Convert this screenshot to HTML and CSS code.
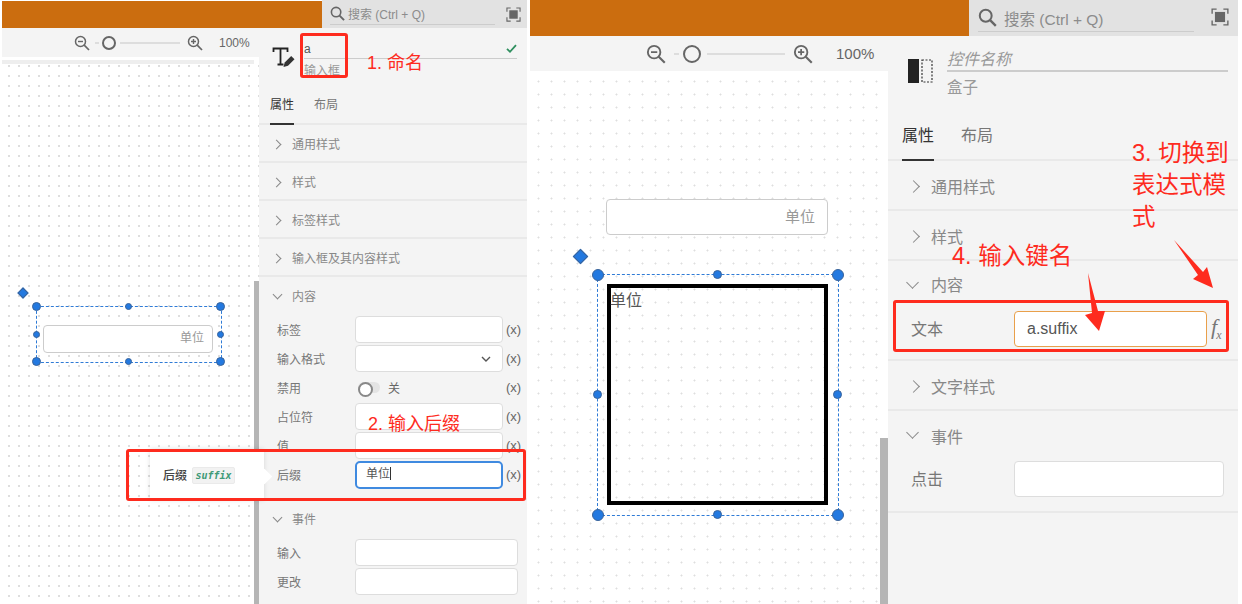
FILE: index.html
```html
<!DOCTYPE html>
<html lang="zh">
<head>
<meta charset="utf-8">
<title>表达式</title>
<link rel="stylesheet" href="styles.css">
</head>
<body>
<div class="page">

  <section class="shot shot-a">
    <header class="top">
      <div class="brand"></div>
      <div class="search">
        <div class="search-field">
          <svg class="ic-search" viewBox="0 0 16 16"><circle cx="6.500" cy="6.500" r="5" fill="none" stroke="#666" stroke-width="1.700"/><path d="M10.200 10.200 15 15" stroke="#666" stroke-width="2"/></svg>
          <span>搜索 (Ctrl + Q)</span>
        </div>
        <svg class="ic-full" viewBox="0 0 16 16"><path d="M1 5V1h4M11 1h4v4M15 11v4h-4M5 15H1v-4" fill="none" stroke="#666" stroke-width="1.200"/><rect x="3.500" y="3.500" width="9" height="9" fill="#666"/></svg>
      </div>
    </header>
    <div class="work">
      <div class="col">
        <div class="zoombar">
          <svg class="ic-zoom" viewBox="0 0 16 16"><circle cx="6.500" cy="6.500" r="5" fill="none" stroke="#666" stroke-width="1.500"/><path d="M4 6.500h5" stroke="#666" stroke-width="1.400"/><path d="M10.200 10.200 15 15" stroke="#666" stroke-width="1.700"/></svg>
          <span class="tick"></span>
          <span class="knob"></span>
          <span class="track"></span>
          <svg class="ic-zoom" viewBox="0 0 16 16"><circle cx="6.500" cy="6.500" r="5" fill="none" stroke="#666" stroke-width="1.500"/><path d="M4 6.500h5M6.500 4v5" stroke="#666" stroke-width="1.400"/><path d="M10.200 10.200 15 15" stroke="#666" stroke-width="1.700"/></svg>
          <span class="pct">100%</span>
        </div>
        <div class="canvas">
          <div class="strip"></div>
          <div class="selection">
            <div class="field">单位</div>
            <i class="h hc tl"></i><i class="h hc tr"></i><i class="h hc bl"></i><i class="h hc br"></i>
            <i class="h hm tm"></i><i class="h hm bm"></i><i class="h hm ml"></i><i class="h hm mr"></i>
            <i class="diamond"></i>
          </div>
          <div class="scroll"></div>
        </div>
      </div>
      <aside class="panel">
        <div class="head">
          <svg class="ic-t" viewBox="0 0 23 21"><path d="M1.500 5V1.500h14V5M8.500 1.500V17M5.500 17.500h6" fill="none" stroke="#222" stroke-width="1.800"/><path d="M11.500 20l1.200-4.500 6.500-6.500 3.300 3.300-6.500 6.500z" fill="#333"/></svg>
          <div class="head-text">
            <div class="name-line"><span>a</span><svg class="ic-check" viewBox="0 0 12 10"><path d="M1 5.500 4.300 8.600 11 1.200" fill="none" stroke="#2f8f5f" stroke-width="2"/></svg></div>
            <div class="kind">输入框</div>
          </div>
        </div>
        <nav class="tabs"><span class="tab on">属性</span><span class="tab">布局</span></nav>
        <div class="acc">通用样式</div>
        <div class="acc">样式</div>
        <div class="acc">标签样式</div>
        <div class="acc">输入框及其内容样式</div>
        <div class="sec">
          <div class="sec-head">内容</div>
          <div class="row"><label>标签</label><div class="inp"></div><em>(x)</em></div>
          <div class="row"><label>输入格式</label><div class="inp sel"><svg class="ic-down" viewBox="0 0 10 6"><path d="M1 1l4 4 4-4" fill="none" stroke="#555" stroke-width="1.400"/></svg></div><em>(x)</em></div>
          <div class="row"><label>禁用</label><div class="tog"><span class="switch"></span><span>关</span></div><em>(x)</em></div>
          <div class="row"><label>占位符</label><div class="inp"></div><em>(x)</em></div>
          <div class="row"><label>值</label><div class="inp"></div><em>(x)</em></div>
          <div class="row"><label>后缀</label><div class="inp act">单位</div><em>(x)</em></div>
        </div>
        <div class="sec sec-ev">
          <div class="sec-head">事件</div>
          <div class="row"><label>输入</label><div class="inp wide"></div></div>
          <div class="row"><label>更改</label><div class="inp wide"></div></div>
        </div>
      </aside>
    </div>
    <div class="tip">
      <b>后缀</b><code>suffix</code>
    </div>
  </section>

  <section class="shot shot-b">
    <header class="top">
      <div class="brand"></div>
      <div class="search">
        <div class="search-field">
          <svg class="ic-search" viewBox="0 0 16 16"><circle cx="6.500" cy="6.500" r="5" fill="none" stroke="#666" stroke-width="1.700"/><path d="M10.200 10.200 15 15" stroke="#666" stroke-width="2"/></svg>
          <span>搜索 (Ctrl + Q)</span>
        </div>
        <svg class="ic-full" viewBox="0 0 16 16"><path d="M1 5V1h4M11 1h4v4M15 11v4h-4M5 15H1v-4" fill="none" stroke="#666" stroke-width="1.200"/><rect x="3.500" y="3.500" width="9" height="9" fill="#666"/></svg>
      </div>
    </header>
    <div class="work">
      <div class="col">
        <div class="zoombar">
          <svg class="ic-zoom" viewBox="0 0 16 16"><circle cx="6.500" cy="6.500" r="5" fill="none" stroke="#666" stroke-width="1.500"/><path d="M4 6.500h5" stroke="#666" stroke-width="1.400"/><path d="M10.200 10.200 15 15" stroke="#666" stroke-width="1.700"/></svg>
          <span class="tick"></span>
          <span class="knob"></span>
          <span class="track"></span>
          <svg class="ic-zoom" viewBox="0 0 16 16"><circle cx="6.500" cy="6.500" r="5" fill="none" stroke="#666" stroke-width="1.500"/><path d="M4 6.500h5M6.500 4v5" stroke="#666" stroke-width="1.400"/><path d="M10.200 10.200 15 15" stroke="#666" stroke-width="1.700"/></svg>
          <span class="pct">100%</span>
        </div>
        <div class="canvas">
          <div class="field free">单位</div>
          <div class="selection">
            <div class="box">单位</div>
            <i class="h hc tl"></i><i class="h hc tr"></i><i class="h hc bl"></i><i class="h hc br"></i>
            <i class="h hm tm"></i><i class="h hm bm"></i><i class="h hm ml"></i><i class="h hm mr"></i>
            <i class="diamond"></i>
          </div>
          <div class="scroll"></div>
        </div>
      </div>
      <aside class="panel">
        <div class="head">
          <svg class="ic-box" viewBox="0 0 25 24"><rect x="0" y="0" width="11" height="24" fill="#222"/><rect x="14" y="1" width="10" height="22" fill="none" stroke="#333" stroke-width="1.200" stroke-dasharray="2 1.500"/></svg>
          <div class="head-text">
            <div class="name-line ph"><span>控件名称</span></div>
            <div class="kind">盒子</div>
          </div>
        </div>
        <nav class="tabs"><span class="tab on">属性</span><span class="tab">布局</span></nav>
        <div class="acc">通用样式</div>
        <div class="acc">样式</div>
        <div class="sec">
          <div class="sec-head">内容</div>
          <div class="row"><label>文本</label><div class="inp expr">a.suffix</div><span class="fx">f<sub>x</sub></span></div>
        </div>
        <div class="acc">文字样式</div>
        <div class="sec sec-ev">
          <div class="sec-head">事件</div>
          <div class="row"><label>点击</label><div class="inp click"></div></div>
        </div>
      </aside>
    </div>
  </section>

  <div class="mark m1"></div>
  <div class="note n1">1. 命名</div>
  <div class="mark m2"></div>
  <div class="note n2">2. 输入后缀</div>
  <div class="mark m3"></div>
  <div class="note big n3">3. 切换到<br>表达式模<br>式</div>
  <div class="note big n4">4. 输入键名</div>
  <svg class="arrows" viewBox="0 0 1242 604"><path d="M1174 240 1203 272 1207 267 1213 288 1193 279 1198 275z" fill="#fe2b1e"/><path d="M1088 273 1098 311 1105 311 1099 331 1085 315 1092 313z" fill="#fe2b1e"/></svg>
</div>
</body>
</html>
```
FILE: styles.css
```css
* { box-sizing: border-box; }
html, body { margin: 0; padding: 0; background: #fff; }
body { font-family: "Liberation Sans", "Noto Sans CJK SC", sans-serif; color: #666; }
.page { position: relative; width: 1242px; height: 604px; overflow: hidden; display: flex; background: #fff; }

.shot { position: relative; height: 604px; display: flex; flex-direction: column; flex: none; }
.shot-a { width: 527px; padding-left: 2px; font-size: 12px; }
.shot-b { width: 708px; margin-left: 3px; font-size: 16px; }

.top { display: flex; flex: none; }
.shot-a .top { height: 28px; }
.shot-b .top { height: 36px; }
.brand { background: #cb6d0f; }
.shot-a .brand { width: 320px; margin-top: 1px; }
.shot-b .brand { width: 439px; }
.search { flex: 1; background: #e2e2e2; display: flex; align-items: flex-start; }
.search-field { display: flex; align-items: center; border-bottom: 1px solid #ccc; color: #8c8c8c; }
.shot-a .search-field { margin: 2px 0 0 8px; width: 165px; height: 23px; gap: 3px; font-size: 12px; }
.shot-b .search-field { margin: 4px 0 0 9px; width: 216px; height: 28px; gap: 7px; font-size: 15.500px; }
.ic-search { flex: none; }
.shot-a .ic-search { width: 15px; height: 15px; }
.shot-b .ic-search { width: 19px; height: 19px; }
.ic-full { flex: none; }
.shot-a .ic-full { width: 15px; height: 15px; margin: 7px 0 0 11px; }
.shot-b .ic-full { width: 18px; height: 18px; margin: 8px 0 0 17px; }

.work { flex: 1; display: flex; min-height: 0; }
.col { display: flex; flex-direction: column; flex: none; }
.shot-a .col { width: 257px; }
.shot-b .col { width: 358px; }
.zoombar { display: flex; align-items: center; flex: none; background: #f4f4f4; }
.shot-a .zoombar { height: 29px; padding: 0 0 0 72px; }
.shot-b .zoombar { height: 35px; padding: 0 0 0 116px; }
.ic-zoom { flex: none; }
.shot-a .ic-zoom { width: 16px; height: 16px; }
.shot-b .ic-zoom { width: 20px; height: 20px; }
.tick { height: 2px; background: #ddd; flex: none; }
.shot-a .tick { width: 4px; margin-left: 5px; }
.shot-b .tick { width: 5px; margin-left: 8px; }
.knob { border: 2px solid #666; border-radius: 50%; flex: none; }
.shot-a .knob { width: 14px; height: 14px; margin-left: 3px; }
.shot-b .knob { width: 18px; height: 18px; margin-left: 4px; }
.track { height: 2px; background: #ddd; flex: none; }
.shot-a .track { width: 60px; margin: 0 7px 0 4px; }
.shot-b .track { width: 78px; margin: 0 8px 0 6px; }
.pct { color: #666; }
.shot-a .pct { margin-left: 16px; font-size: 12px; }
.shot-b .pct { margin-left: 23px; font-size: 15px; }

.canvas { position: relative; flex: 1; background-color: #fff; }
.shot-a .canvas { background-image: radial-gradient(circle, #dedede 0.8px, transparent 1px); background-size: 10px 10px; background-position: 2px 4px; }
.shot-b .canvas { background-image: radial-gradient(circle, #dedede 0.9px, transparent 1.100px); background-size: 13px 13px; background-position: 2px 4px; }
.strip { height: 4px; margin-top: 3px; margin-right: 5px; background: #eee; }
.scroll { position: absolute; right: 0; bottom: 0; background: #b5b5b5; }
.shot-a .scroll { width: 5px; height: 323px; right: 0; }
.shot-b .scroll { width: 8px; height: 166px; }

.selection { position: absolute; border: 1px dashed #2f7bd6; }
.shot-a .selection { left: 34px; top: 249px; width: 186px; height: 57px; }
.shot-b .selection { left: 67px; top: 203px; width: 242px; height: 242px; }
.field { position: absolute; background: #fff; border: 1px solid #ccc; border-radius: 4px; color: #999; text-align: right; }
.shot-a .field { left: 6px; top: 18px; width: 170px; height: 28px; line-height: 25px; font-size: 12px; padding-right: 8px; }
.shot-b .field.free { left: 76px; top: 128px; width: 222px; height: 36px; line-height: 34px; font-size: 15px; padding-right: 12px; }
.box { position: absolute; left: 9px; top: 9px; width: 221px; height: 221px; border: 4px solid #000; color: #555; font-size: 16px; line-height: 22px; padding-top: 2px; text-indent: -1px; }

.h { position: absolute; border-radius: 50%; background: #2379e0; border: 1px solid #39639a; }
.shot-a .hc { width: 9px; height: 9px; margin: -5px; }
.shot-a .hm { width: 7px; height: 7px; margin: -4px; }
.shot-b .hc { width: 12px; height: 12px; margin: -6.500px; }
.shot-b .hm { width: 9px; height: 9px; margin: -5px; }
.tl { left: 0; top: 0; }
.tr { left: 100%; top: 0; }
.bl { left: 0; top: 100%; }
.br { left: 100%; top: 100%; }
.tm { left: 50%; top: 0; }
.bm { left: 50%; top: 100%; }
.ml { left: 0; top: 50%; }
.mr { left: 100%; top: 50%; }
.diamond { position: absolute; background: #2379e0; border: 1px solid #39639a; transform: rotate(45deg); }
.shot-a .diamond { width: 8px; height: 8px; left: -18px; top: -18px; }
.shot-b .diamond { width: 11px; height: 11px; left: -23px; top: -24px; }

.panel { flex: 1; background: #f4f4f4; display: flex; flex-direction: column; min-width: 0; }
.head { display: flex; flex: none; }
.shot-a .head { height: 66px; padding: 19px 10px 0 13px; gap: 9px; }
.shot-b .head { height: 79px; padding: 23px 10px 0 20px; gap: 14px; }
.ic-t { width: 23px; height: 21px; flex: none; }
.ic-box { width: 25px; height: 24px; flex: none; }
.head-text { flex: 1; min-width: 0; }
.name-line { display: flex; justify-content: space-between; align-items: center; border-bottom: 1px solid #ccc; color: #555; }
.shot-a .name-line { height: 20px; margin-top: -8px; font-size: 12px; }
.shot-b .name-line { height: 27px; margin-top: -14px; border-bottom-width: 2px; }
.ph { color: #999; font-style: italic; font-size: 16px; }
.ic-check { width: 11px; height: 9px; }
.kind { color: #999; }
.shot-a .kind { margin-top: 3px; font-size: 12px; line-height: 18px; }
.shot-b .kind { margin-top: 4px; font-size: 15.500px; line-height: 24px; }

.tabs { display: flex; flex: none; border-bottom: 2px solid #e9e9e9; }
.shot-a .tabs { height: 31px; padding-left: 11px; gap: 20px; }
.shot-b .tabs { height: 46px; padding-left: 14px; gap: 27px; }
.tab { display: block; margin-bottom: -2px; color: #777; }
.shot-a .tab { height: 31px; padding-top: 1px; }
.shot-b .tab { height: 46px; padding-top: 7px; }
.tab.on { color: #333; border-bottom: 2px solid #333; }

.acc { position: relative; flex: none; border-bottom: 2px solid #e9e9e9; color: #888; }
.shot-a .acc { height: 38px; line-height: 40px; padding-left: 33px; }
.shot-b .acc { height: 50px; line-height: 53px; padding-left: 43px; }
.acc::before { content: ""; position: absolute; border-right: 1.500px solid #888; border-top: 1.500px solid #888; transform: rotate(45deg); }
.shot-a .acc::before { width: 6px; height: 6px; left: 14px; top: 16px; }
.shot-b .acc::before { width: 8px; height: 8px; left: 21px; top: 21px; }

.sec { flex: none; border-bottom: 2px solid #e9e9e9; }
.shot-a .sec { height: 223px; }
.shot-a .sec-ev { border-bottom: 0; height: auto; }
.shot-b .sec { height: 100px; }
.shot-b .sec-ev { height: 102px; }
.sec-head { position: relative; color: #888; }
.shot-a .sec-head { height: 39px; line-height: 40px; padding-left: 33px; }
.shot-b .sec-head { height: 50px; line-height: 50px; padding-left: 43px; }
.sec-head::before { content: ""; position: absolute; border-right: 1.500px solid #888; border-bottom: 1.500px solid #888; transform: rotate(45deg); }
.shot-a .sec-head::before { width: 6px; height: 6px; left: 15px; top: 14px; }
.shot-b .sec-head::before { width: 8px; height: 8px; left: 20px; top: 17px; }
.shot-b .sec-ev .sec-head { height: 50px; line-height: 53px; }

.row { display: flex; align-items: center; }
.shot-a .row { height: 27px; margin-bottom: 2px; padding-left: 18px; }
.shot-b .row { padding-left: 23px; }
.row label { flex: none; color: #777; }
.shot-a .row label { width: 78px; }
.shot-b .row label { width: 103px; margin-top: -2px; }
.inp { background: #fff; border: 1px solid #ddd; border-radius: 4px; flex: none; color: #555; }
.shot-a .inp { width: 148px; height: 27px; line-height: 25px; padding-left: 9px; }
.shot-a .row em { margin-left: 3px; font-style: normal; color: #666; font-size: 13px; }
.sel { display: flex; align-items: center; justify-content: flex-end; padding-right: 11px; }
.ic-down { width: 10px; height: 6px; }
.tog { width: 148px; display: flex; align-items: center; gap: 8px; padding-left: 3px; color: #666; }
.switch { position: relative; width: 22px; height: 11px; border-radius: 6px; background: #e4e4e4; }
.switch::before { content: ""; position: absolute; left: 0; top: 0; width: 11px; height: 11px; border-radius: 50%; background: #fff; border: 2px solid #888; }
.shot-a .inp.act { border: 2px solid #3f8ae0; line-height: 23px; height: 28px; padding-left: 9px; border-radius: 5px; }
.act::after { content: ""; display: inline-block; width: 1px; height: 13px; background: #333; vertical-align: -2px; }
.shot-a .inp.wide { width: 163px; }
.shot-b .inp.expr { width: 193px; height: 36px; line-height: 34px; padding-left: 12px; border: 1px solid #e9a04b; font-size: 16px; }
.shot-b .inp.click { width: 210px; height: 36px; }
.fx { margin-left: 4px; font: italic 400 22px "Liberation Serif", serif; color: #777; letter-spacing: -1px; }
.fx sub { font-size: 12px; }

.tip { position: absolute; left: 150px; top: 449px; width: 114px; height: 51px; background: #fff; display: flex; align-items: center; gap: 5px; padding-left: 13px; box-shadow: 0 0 5px rgba(0,0,0,.12); font-size: 12px; color: #444; }
.tip::after { content: ""; position: absolute; right: -6px; top: 22px; width: 11px; height: 11px; background: #fff; transform: rotate(45deg); }
.tip b { font-weight: 500; }
.tip code { background: #f2f2f2; border: 1px solid #eaeaea; border-radius: 2px; width: 43px; height: 17px; text-align: center; color: #3f9a78; font: italic 700 10px/15px "DejaVu Sans Mono", monospace; margin-top: 1px; }

.mark { position: absolute; border: 3px solid #fe2b1e; border-radius: 3px; }
.m1 { left: 300px; top: 33px; width: 48px; height: 45px; }
.m2 { left: 126px; top: 449px; width: 400px; height: 52px; }
.m3 { left: 893px; top: 300px; width: 336px; height: 52px; }
.note { position: absolute; color: #fe2b1e; font-size: 18px; line-height: 24px; }
.big { font-size: 23.500px; line-height: 32px; }
.n1 { left: 367px; top: 51px; }
.n2 { left: 368px; top: 412px; }
.n3 { left: 1132px; top: 137px; }
.n4 { left: 952px; top: 240px; }
.arrows { position: absolute; left: 0; top: 0; width: 1242px; height: 604px; pointer-events: none; }
```
